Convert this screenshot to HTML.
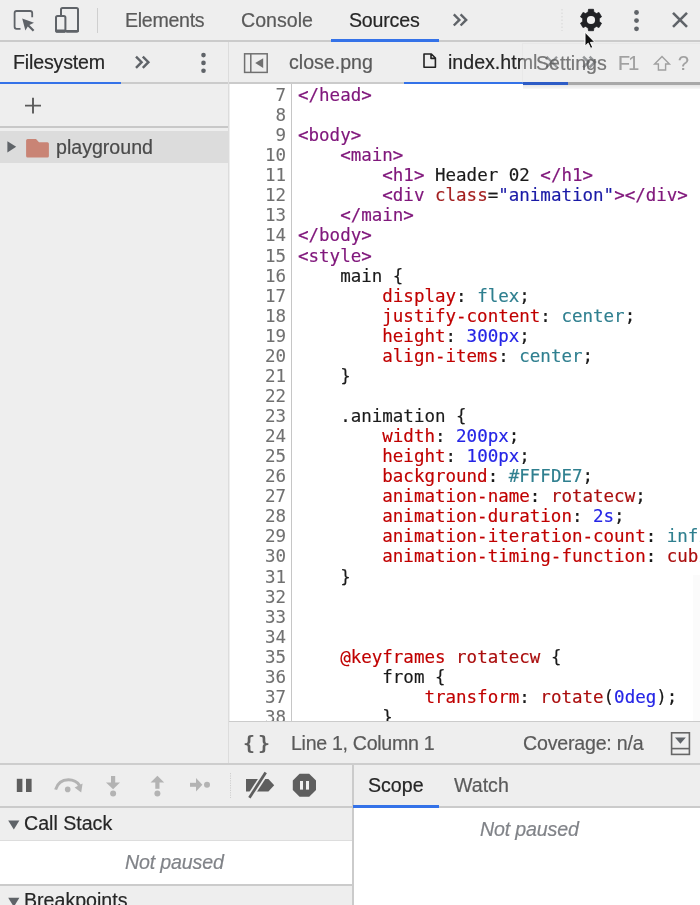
<!DOCTYPE html>
<html>
<head>
<meta charset="utf-8">
<title>DevTools - Sources</title>
<style>
html,body{margin:0;padding:0;}
body{width:700px;height:905px;overflow:hidden;position:relative;background:#eeeeee;
  font-family:"Liberation Sans",sans-serif;font-size:19.6px;color:#5a5a5a;}
.abs{position:absolute;}
.t,.code{will-change:transform;}
.t{position:absolute;white-space:nowrap;line-height:24px;-webkit-text-stroke:0.2px currentColor;}
.dark{color:#262626;}
/* top toolbar */
#topbar{left:0;top:0;width:700px;height:40px;background:#eeeeee;border-bottom:2px solid #cbcbcb;}
/* sidebar */
#side{left:0;top:42px;width:229px;height:680px;background:#eeeeee;}
#sidetabs{left:0;top:42px;width:229px;height:40px;background:#eeeeee;border-bottom:2px solid #cbcbcb;}
#addrow{left:0;top:84px;width:229px;height:42px;background:#eeeeee;border-bottom:2px solid #c8c8c8;}
#treesel{left:0;top:131px;width:229px;height:32px;background:#dcdcdc;}
#vsplit{left:228px;top:42px;width:1px;height:721px;background:#dcdcdc;}
/* editor */
#edtabs{left:229px;top:42px;width:471px;height:40px;background:#eeeeee;border-bottom:2px solid #cbcbcb;}
#editor{left:230px;top:84px;width:470px;height:638px;background:#fff;overflow:hidden;}
#gutter{left:0;top:0;width:60.5px;height:638px;background:#fff;border-right:1.5px solid #c6c6c6;}
.code{font-family:"DejaVu Sans Mono","Liberation Mono",monospace;font-size:17.5px;line-height:20.07px;white-space:pre;-webkit-text-stroke:0.18px currentColor;}
#nums{left:0;top:1px;width:56px;text-align:right;color:#707070;-webkit-text-stroke:0.1px currentColor;}
#src{left:67.7px;top:1px;color:#1a1a1a;}
.tg{color:#80187c;}
.at{color:#a31f1f;}
.av{color:#1a1aa6;}
.pr{color:#c00000;}
.nu{color:#2424e6;}
.kw{color:#2f7f8f;}
.df{color:#aa0d0d;}
/* status bar */
#status{left:229px;top:721px;width:471px;height:42px;background:#eeeeee;border-top:1px solid #cbcbcb;}
/* bottom */
#hsplit{left:0;top:763px;width:700px;height:2px;background:#cdcdcd;}
#dbgbar{left:0;top:765px;width:353px;height:41px;background:#eeeeee;border-bottom:2px solid #cbcbcb;}
#scopetabs{left:354px;top:765px;width:346px;height:41px;background:#eeeeee;border-bottom:2px solid #cbcbcb;}
#vsplit2{left:352px;top:765px;width:2px;height:140px;background:#cbcbcb;}
#callhdr{left:0;top:808px;width:352px;height:32px;background:#eeeeee;border-bottom:1px solid #dddddd;}
#callbody{left:0;top:841px;width:352px;height:43px;background:#fff;border-bottom:2px solid #cbcbcb;}
#bphdr{left:0;top:886px;width:352px;height:19px;background:#eeeeee;}
#scopebody{left:354px;top:808px;width:346px;height:97px;background:#fff;}
.it{font-style:italic;color:#808388;}
.blue{background:#3472e8;}
/* tooltip */
#tip{left:523px;top:44px;width:177px;height:38px;background:rgba(238,238,238,0.42);outline:1px solid rgba(214,214,214,0.22);}
</style>
</head>
<body>
<!-- TOP TOOLBAR -->
<div id="topbar" class="abs"></div>
<div class="abs" style="left:97px;top:8px;width:1px;height:25px;background:#cfcfcf;"></div>
<div class="t" style="left:125.2px;top:8px;letter-spacing:-0.3px;">Elements</div>
<div class="t" style="left:241.3px;top:8px;">Console</div>
<div class="t dark" style="left:349px;top:8px;letter-spacing:-0.2px;">Sources</div>
<div class="abs blue" style="left:331px;top:39px;width:108px;height:3px;"></div>

<!-- SIDEBAR -->
<div id="side" class="abs"></div>
<div id="sidetabs" class="abs"></div>
<div class="t dark" style="left:13px;top:50px;letter-spacing:-0.17px;">Filesystem</div>
<div class="abs blue" style="left:0;top:81.5px;width:120.5px;height:2.5px;"></div>
<div id="addrow" class="abs"></div>
<div id="treesel" class="abs"></div>
<div class="t" style="left:56px;top:135px;color:#4a4a4a;">playground</div>
<div id="vsplit" class="abs"></div>

<!-- EDITOR TABS -->
<div id="edtabs" class="abs"></div>
<div class="t" style="left:289.2px;top:50px;">close.png</div>
<div class="t dark" style="left:448.2px;top:50px;">index.html</div>
<div class="abs blue" style="left:404px;top:81.5px;width:164px;height:2.5px;"></div>

<!-- EDITOR -->
<div id="editor" class="abs">
<div id="gutter" class="abs"></div>
<div id="nums" class="abs code">7
8
9
10
11
12
13
14
15
16
17
18
19
20
21
22
23
24
25
26
27
28
29
30
31
32
33
34
35
36
37
38</div>
<div id="src" class="abs code"><span class="tg">&lt;/head&gt;</span>

<span class="tg">&lt;body&gt;</span>
    <span class="tg">&lt;main&gt;</span>
        <span class="tg">&lt;h1&gt;</span> Header 02 <span class="tg">&lt;/h1&gt;</span>
        <span class="tg">&lt;div </span><span class="at">class</span>=<span class="av">"animation"</span><span class="tg">&gt;&lt;/div&gt;</span>
    <span class="tg">&lt;/main&gt;</span>
<span class="tg">&lt;/body&gt;</span>
<span class="tg">&lt;style&gt;</span>
    main {
        <span class="pr">display</span>: <span class="kw">flex</span>;
        <span class="pr">justify-content</span>: <span class="kw">center</span>;
        <span class="pr">height</span>: <span class="nu">300px</span>;
        <span class="pr">align-items</span>: <span class="kw">center</span>;
    }

    .animation {
        <span class="pr">width</span>: <span class="nu">200px</span>;
        <span class="pr">height</span>: <span class="nu">100px</span>;
        <span class="pr">background</span>: <span class="kw">#FFFDE7</span>;
        <span class="pr">animation-name</span>: <span class="df">rotatecw</span>;
        <span class="pr">animation-duration</span>: <span class="nu">2s</span>;
        <span class="pr">animation-iteration-count</span>: <span class="kw">infinite</span>;
        <span class="pr">animation-timing-function</span>: <span class="df">cubic-bezier</span>(<span class="nu">0.4</span>, <span class="nu">0</span>, <span class="nu">0.2</span>, <span class="nu">1</span>);
    }



    <span class="pr">@keyframes</span> <span class="df">rotatecw</span> {
        from {
            <span class="pr">transform</span>: <span class="df">rotate</span>(<span class="nu">0deg</span>);
        }</div>
</div>

<div class="abs" style="left:693px;top:575px;width:7px;height:146px;background:#fbfbfb;"></div>
<!-- STATUS BAR -->
<div id="status" class="abs"></div>
<div class="t code" style="left:242.5px;top:732px;font-weight:bold;color:#5e5e5e;font-size:20px;line-height:22px;letter-spacing:3px;-webkit-text-stroke:0;">{}</div>
<div class="t" style="left:291px;top:731px;letter-spacing:-0.3px;">Line 1, Column 1</div>
<div class="t" style="left:522.9px;top:731px;letter-spacing:-0.2px;">Coverage: n/a</div>

<!-- BOTTOM -->
<div id="hsplit" class="abs"></div>
<div id="dbgbar" class="abs"></div>
<div id="scopetabs" class="abs"></div>
<div id="vsplit2" class="abs"></div>
<div class="t dark" style="left:368px;top:773px;">Scope</div>
<div class="t" style="left:454px;top:773px;">Watch</div>
<div class="abs blue" style="left:353px;top:805px;width:86px;height:3px;"></div>
<div id="callhdr" class="abs"></div>
<div class="t dark" style="left:24.3px;top:811px;">Call Stack</div>
<div id="callbody" class="abs"></div>
<div class="t it" style="left:124.7px;top:850px;letter-spacing:-0.15px;">Not paused</div>
<div id="bphdr" class="abs"></div>
<div class="t dark" style="left:24.3px;top:888px;">Breakpoints</div>
<div id="scopebody" class="abs"></div>
<div class="t it" style="left:479.7px;top:816.5px;letter-spacing:-0.15px;">Not paused</div>


<!-- ICONS -->
<svg class="abs" style="left:0;top:0;" width="700" height="905" viewBox="0 0 700 905">
<g fill="none" stroke="#5f6368" stroke-width="1.8" stroke-linecap="butt" stroke-linejoin="round">
  <!-- inspect -->
  <path d="M20.5 28.8 H16.5 Q14.6 28.8 14.6 26.8 V13 Q14.6 11 16.6 11 H30 Q32.2 11 32.2 13 V17.2"/>
  <!-- device big -->
  <path d="M61 15 V9.5 Q61 8 62.5 8 H76.5 Q78 8 78 9.5 V30 Q78 31.5 76.5 31.5 H66.5" stroke-width="2"/>
  <!-- device small -->
  <rect x="56" y="16" width="9.4" height="15.8" rx="1.6" stroke-width="2"/>
</g>
<path d="M55.5 29.4 H66 V31 Q66 32.6 64.4 32.6 H57 Q55.4 32.6 55.4 31 Z" fill="#5f6368"/>
<path d="M66 30 H79 V30.8 Q79 32.4 77.4 32.4 H66 Z" fill="#5f6368"/>
<!-- inspect arrow -->
<path d="M22.2 18.4 L34 22.8 L29.4 25 L34.4 30 L32.8 31.4 L27.8 26.6 L25.4 30.6 Z" fill="#5f6368"/>
<!-- toolbar divider dotted (before gear) -->
<line x1="562" y1="9" x2="562" y2="31" stroke="#d6d6d6" stroke-width="1" stroke-dasharray="1.5 2"/>
<!-- >> top -->
<g fill="none" stroke="#5f6368" stroke-width="2.4">
  <path d="M453.8 14.3 L459.4 19.9 L453.8 25.5"/>
  <path d="M460.6 14.3 L466.2 19.9 L460.6 25.5"/>
  <path d="M136 56.6 L141.6 62.2 L136 67.8"/>
  <path d="M142.8 56.6 L148.4 62.2 L142.8 67.8"/>
</g>
<!-- kebab top -->
<g fill="#5f6368">
  <circle cx="636.5" cy="12.5" r="2.4"/><circle cx="636.5" cy="20.6" r="2.4"/><circle cx="636.5" cy="28.8" r="2.4"/>
  <circle cx="203.5" cy="55.1" r="2.3"/><circle cx="203.5" cy="62.9" r="2.3"/><circle cx="203.5" cy="70.8" r="2.3"/>
</g>
<!-- close X -->
<path d="M673 12.8 L687 26.8 M687 12.8 L673 26.8" stroke="#5f6368" stroke-width="2.6" fill="none"/>
<!-- gear -->
<g transform="translate(591 20)">
  <path fill="#202124" stroke="#202124" stroke-width="0.8" stroke-linejoin="round" d="M-2.90 -7.90 L-2.50 -10.70 L2.50 -10.70 L2.90 -7.90 L5.39 -6.46 L8.02 -7.52 L10.52 -3.18 L8.29 -1.44 L8.29 1.44 L10.52 3.18 L8.02 7.52 L5.39 6.46 L2.90 7.90 L2.50 10.70 L-2.50 10.70 L-2.90 7.90 L-5.39 6.46 L-8.02 7.52 L-10.52 3.18 L-8.29 1.44 L-8.29 -1.44 L-10.52 -3.18 L-8.02 -7.52 L-5.39 -6.46 Z"/>
  <circle r="4.1" fill="#eeeeee"/>
</g>
<!-- plus -->
<path d="M25 105.6 H41 M33 97.8 V113.4" stroke="#5a5a5a" stroke-width="1.9" fill="none"/>
<!-- tree arrow + folder -->
<path d="M7.4 141.2 L16.2 146.8 L7.4 152.4 Z" fill="#5f6368"/>
<path d="M27.6 139 H36 L39 142.2 H47.4 Q48.9 142.2 48.9 143.7 V156.1 Q48.9 157.6 47.4 157.6 H27.6 Q26.1 157.6 26.1 156.1 V140.5 Q26.1 139 27.6 139 Z" fill="#c98475"/>
<!-- navigator toggle -->
<g fill="none" stroke="#707070" stroke-width="1.5">
  <rect x="244.6" y="53.8" width="22.6" height="18.6"/>
  <line x1="250.8" y1="53.8" x2="250.8" y2="72.4"/>
</g>
<path d="M263.2 58.2 V68 L255.2 63.1 Z" fill="#707070"/>
<!-- file icon -->
<path d="M424 54 H431.4 L435.4 58 V67.2 H424 Z M431 54.2 V58.4 H435.2" fill="none" stroke="#222" stroke-width="1.6" stroke-linejoin="round"/>
<!-- tab close x and >> (under tooltip) -->
<path d="M546.6 56.8 L557 67.2 M557 56.8 L546.6 67.2" stroke="#54585c" stroke-width="2.3" fill="none"/>
<g fill="none" stroke="#54585c" stroke-width="2.5">
  <path d="M583.2 56.6 L588.6 62 L583.2 67.4"/>
  <path d="M589.6 56.6 L595 62 L589.6 67.4"/>
</g>
<!-- drawer icon -->
<g fill="none" stroke="#666" stroke-width="1.6">
  <rect x="671.6" y="732.8" width="17.8" height="21.6"/>
  <line x1="671.6" y1="748.6" x2="689.4" y2="748.6"/>
</g>
<path d="M675 737.4 H685.8 L680.4 743.8 Z" fill="#5f6368"/>
<!-- debugger toolbar -->
<g fill="#5e5e5e">
  <rect x="16.8" y="778.8" width="5.6" height="13.2"/><rect x="26" y="778.8" width="5.6" height="13.2"/>
</g>
<g fill="#b3b3b3">
  <!-- step over -->
  <circle cx="67.7" cy="789.4" r="2.8"/>
  <path d="M55.6 789.6 Q58.4 780 68.4 779.8 Q76 779.8 79.6 785.6" fill="none" stroke="#b3b3b3" stroke-width="3"/>
  <path d="M74.6 787.6 L82.6 783.6 L81.2 792.6 Z"/>
  <!-- step into -->
  <rect x="111" y="776" width="4.2" height="7"/>
  <path d="M106 782.4 H120 L113.1 789.2 Z"/>
  <circle cx="113.1" cy="793.4" r="3"/>
  <!-- step out -->
  <rect x="155.3" y="782" width="4.2" height="6.8"/>
  <path d="M150.6 782.6 H164.2 L157.4 775.8 Z"/>
  <circle cx="157.4" cy="793.4" r="3"/>
  <!-- step -->
  <rect x="190" y="782.8" width="6.6" height="4"/>
  <path d="M196 778 L202.4 784.8 L196 791.4 Z"/>
  <circle cx="207" cy="784.7" r="3"/>
</g>
<line x1="230.5" y1="773" x2="230.5" y2="798" stroke="#cfcfcf" stroke-width="1" stroke-dasharray="1.2 1.2"/>
<!-- deactivate breakpoints -->
<path d="M246 779 H268.4 L274.2 785.2 L268.4 791.6 H246 Z" fill="#5e5e5e"/>
<line x1="266.6" y1="771.2" x2="248.5" y2="799.1" stroke="#eeeeee" stroke-width="6.2"/>
<line x1="265.7" y1="772.6" x2="249.4" y2="797.7" stroke="#5e5e5e" stroke-width="2.8"/>
<!-- pause on exceptions -->
<path d="M299.6 773.8 H309.2 L316 780.6 V790 L309.2 796.8 H299.6 L292.8 790 V780.6 Z" fill="#5e5e5e"/>
<rect x="300" y="781" width="3" height="8.6" fill="#eeeeee"/><rect x="306" y="781" width="3" height="8.6" fill="#eeeeee"/>
<!-- section triangles -->
<path d="M8.2 820.6 H19.4 L13.8 829.6 Z" fill="#5f6368"/>
<path d="M8.2 897.8 H19.4 L13.8 906.8 Z" fill="#5f6368"/>
</svg>

<!-- TOOLTIP -->
<div id="tip" class="abs"></div>
<div class="abs" style="left:523px;top:82px;width:45px;height:2.5px;background:#2d5cc6;"></div>
<div class="abs" style="left:568px;top:82px;width:132px;height:2.5px;background:#a8a8a8;"></div>
<div class="abs" style="left:523px;top:84.5px;width:177px;height:4px;background:linear-gradient(rgba(0,0,0,0.10),rgba(0,0,0,0.03));"></div>
<div class="t" style="left:536px;top:51px;color:rgba(90,90,90,0.8);-webkit-text-stroke:0.2px rgba(90,90,90,0.8);">Settings</div>
<div class="t" style="left:617.6px;top:51px;letter-spacing:-1.6px;color:rgba(140,140,140,0.78);">F1</div>
<div class="t" style="left:678px;top:51px;color:rgba(140,140,140,0.78);">?</div>
<svg class="abs" style="left:0;top:0;" width="700" height="905" viewBox="0 0 700 905">
<path d="M662 56.6 L669.4 64 H665.6 V70 H658.4 V64 H654.6 Z" fill="none" stroke="rgba(140,140,140,0.8)" stroke-width="1.4" stroke-linejoin="miter"/>
<!-- cursor -->
<path d="M585 32.2 V46.2 L588.2 43.2 L590.6 48.4 L592.8 47.4 L590.4 42.4 L594.8 42.2 Z" fill="#111" stroke="#fff" stroke-width="1" stroke-linejoin="round"/>
</svg>
</body>
</html>
